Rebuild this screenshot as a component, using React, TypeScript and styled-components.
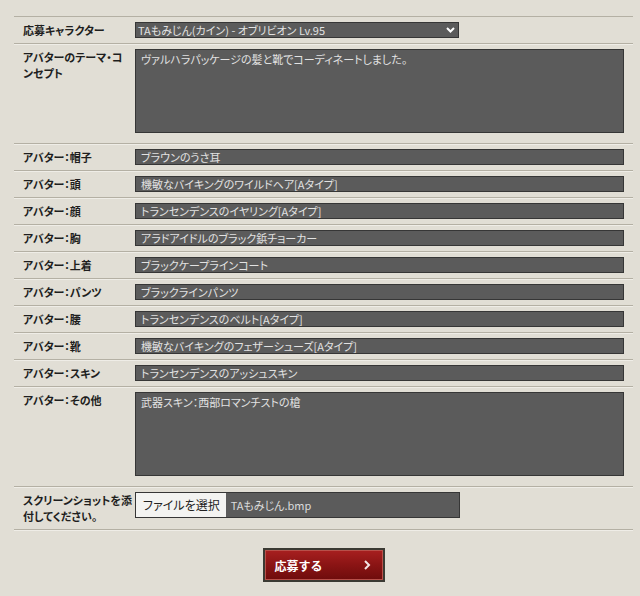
import React, { ReactElement } from 'react';
import styled, { createGlobalStyle } from 'styled-components';

const GlobalStyle = createGlobalStyle`
  html, body {
    margin: 0;
    padding: 0;
    background: #e1ded5;
  }
  body {
    font-family: 'Noto Sans CJK JP', 'Noto Sans', sans-serif;
    font-feature-settings: 'palt';
  }
`;

const items: { label: string; value: string }[] = [
  { label: 'アバター：帽子', value: 'ブラウンのうさ耳' },
  { label: 'アバター：頭', value: '機敏なバイキングのワイルドヘア[Aタイプ]' },
  { label: 'アバター：顔', value: 'トランセンデンスのイヤリング[Aタイプ]' },
  { label: 'アバター：胸', value: 'アラドアイドルのブラック鋲チョーカー' },
  { label: 'アバター：上着', value: 'ブラックケープラインコート' },
  { label: 'アバター：パンツ', value: 'ブラックラインパンツ' },
  { label: 'アバター：腰', value: 'トランセンデンスのベルト[Aタイプ]' },
  { label: 'アバター：靴', value: '機敏なバイキングのフェザーシューズ[Aタイプ]' },
  { label: 'アバター：スキン', value: 'トランセンデンスのアッシュスキン' },
];

const App = (): ReactElement => {
  return (
    <Page>
      <GlobalStyle />
      <Form>
        <Row>
          <Label>応募キャラクター</Label>
          <Select>
            <span>TAもみじん(カイン) - オブリビオン Lv.95</span>
            <svg width="9" height="6" viewBox="0 0 9 6">
              <path d="M1 1 L4.5 4.5 L8 1" fill="none" stroke="#fff" strokeWidth="2" />
            </svg>
          </Select>
        </Row>
        <Row tall>
          <Label>アバターのテーマ・コンセプト</Label>
          <Area>ヴァルハラパッケージの髪と靴でコーディネートしました。</Area>
        </Row>
        {items.map((it) => (
          <Row key={it.label}>
            <Label>{it.label}</Label>
            <Field>{it.value}</Field>
          </Row>
        ))}
        <Row tall>
          <Label>アバター：その他</Label>
          <Area>武器スキン：西部ロマンチストの槍</Area>
        </Row>
        <Row>
          <Label>スクリーンショットを添付してください。</Label>
          <FileBox>
            <FileButton>ファイルを選択</FileButton>
            <FileName>TAもみじん.bmp</FileName>
          </FileBox>
        </Row>
      </Form>
      <Actions>
        <Submit>
          <span>応募する</span>
          <svg width="8" height="10" viewBox="0 0 8 10">
            <path d="M2 1 L6 5 L2 9" fill="none" stroke="#f4e6e6" strokeWidth="2" />
          </svg>
        </Submit>
      </Actions>
    </Page>
  );
};

const Page = styled.div`
  width: 640px;
  height: 596px;
  padding: 16px 7px 0 14px;
  box-sizing: border-box;
`;

const Form = styled.div`
  border-top: 1px solid #b4b0a4;
`;

const Row = styled.div<{ tall?: boolean }>`
  display: grid;
  grid-template-columns: 121px 1fr;
  padding: 5px 9px ${(p) => (p.tall ? '10px' : '5px')} 0;
  border-bottom: 1px solid #b4b0a4;
  box-shadow: 0 1px 0 #efede7;
`;

const Label = styled.div`
  padding: 0 3px 0 9px;
  font-size: 11px;
  font-weight: 700;
  line-height: 16px;
  color: #1e1e1e;
`;

const Field = styled.div`
  height: 16px;
  box-sizing: border-box;
  background: #5b5b5b;
  border: 1px solid #363636;
  padding: 0 5px;
  font-size: 11px;
  line-height: 14px;
  color: #e2e2e2;
  white-space: nowrap;
  overflow: hidden;
`;

const Select = styled(Field)`
  width: 324px;
  padding: 0 3px 0 2px;
  display: flex;
  align-items: center;
  justify-content: space-between;
`;

const Area = styled(Field)`
  height: 84px;
  padding: 2px 5px;
  line-height: 14px;
`;

const FileBox = styled.div`
  width: 325px;
  height: 26px;
  box-sizing: border-box;
  background: #5b5b5b;
  border: 1px solid #363636;
  display: flex;
  align-items: stretch;
`;

const FileButton = styled.div`
  background: #f3f3f1;
  color: #222;
  font-size: 12px;
  line-height: 24px;
  padding: 0 6px 0 7px;
`;

const FileName = styled.div`
  color: #dcdcdc;
  font-size: 11px;
  line-height: 24px;
  padding-left: 5px;
`;

const Actions = styled.div`
  display: flex;
  justify-content: center;
  padding-top: 18px;
`;

const Submit = styled.button`
  width: 122px;
  height: 34px;
  box-sizing: border-box;
  border: 2px solid #3b3a33;
  box-shadow: inset 0 0 0 1px #b8504a;
  background: linear-gradient(#a82020 0%, #8a1414 50%, #6e0c0c 100%);
  color: #fff;
  font-family: inherit;
  font-size: 12px;
  font-weight: 700;
  display: flex;
  align-items: center;
  justify-content: space-between;
  padding: 0 12px 0 10px;
  cursor: pointer;
`;

export default App;
